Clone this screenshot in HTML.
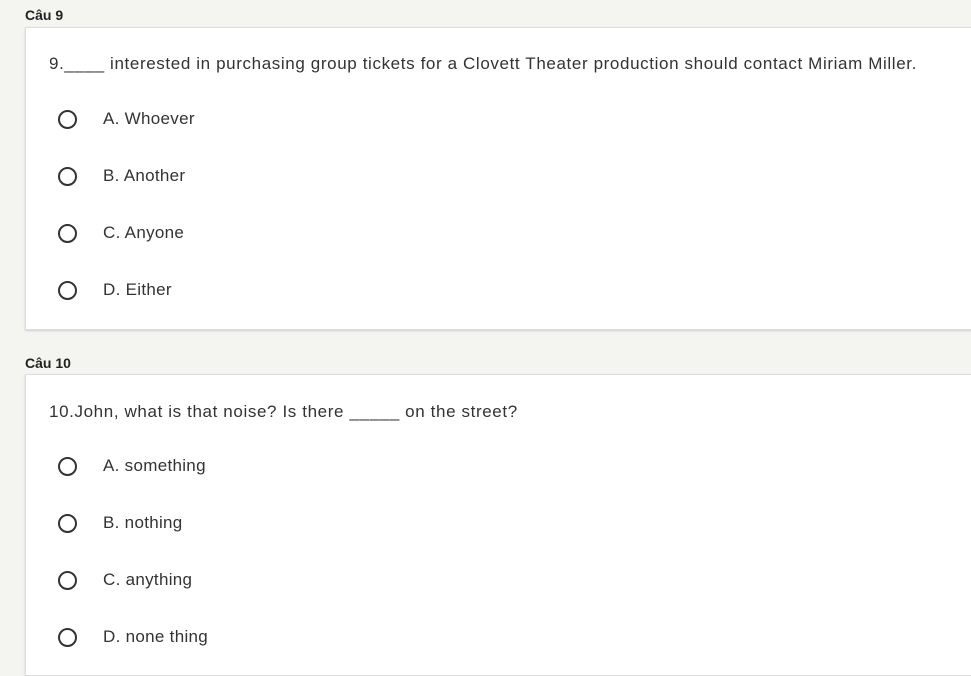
<!DOCTYPE html>
<html><head><meta charset="utf-8"><style>
html,body{margin:0;height:656px}
body{background:#f4f4f1;font-family:"Liberation Sans",sans-serif;color:#333;width:971px;overflow:hidden;position:relative}
.h{position:absolute;left:25px;font-weight:bold;font-size:14px;color:#222}
.card{position:absolute;left:25px;width:960px;background:#fff;border:1px solid #ddd;box-shadow:0 1px 2px rgba(0,0,0,.15)}
.q{position:absolute;left:23px;font-size:17px;color:#333;white-space:nowrap;letter-spacing:0.62px}
.o{position:absolute;left:77px;font-size:17px;color:#333;letter-spacing:0.3px}
.r{position:absolute;left:32px;width:15px;height:15px;border:2px solid #333;border-radius:50%}
</style></head><body>
<div class="h" style="top:7px">Câu 9</div>
<div class="card" style="top:27px;height:301px">
<div class="q" style="top:26px">9.____ interested in purchasing group tickets for a Clovett Theater production should contact Miriam Miller.</div>
<div class="r" style="top:82px"></div><div class="o" style="top:81px">A. Whoever</div>
<div class="r" style="top:139px"></div><div class="o" style="top:138px">B. Another</div>
<div class="r" style="top:196px"></div><div class="o" style="top:195px">C. Anyone</div>
<div class="r" style="top:253px"></div><div class="o" style="top:252px">D. Either</div>
</div>
<div class="h" style="top:355px">Câu 10</div>
<div class="card" style="top:374px;height:300px">
<div class="q" style="top:27px">10.John, what is that noise? Is there _____ on the street?</div>
<div class="r" style="top:82px"></div><div class="o" style="top:81px">A. something</div>
<div class="r" style="top:139px"></div><div class="o" style="top:138px">B. nothing</div>
<div class="r" style="top:196px"></div><div class="o" style="top:195px">C. anything</div>
<div class="r" style="top:253px"></div><div class="o" style="top:252px">D. none thing</div>
</div>
</body></html>
